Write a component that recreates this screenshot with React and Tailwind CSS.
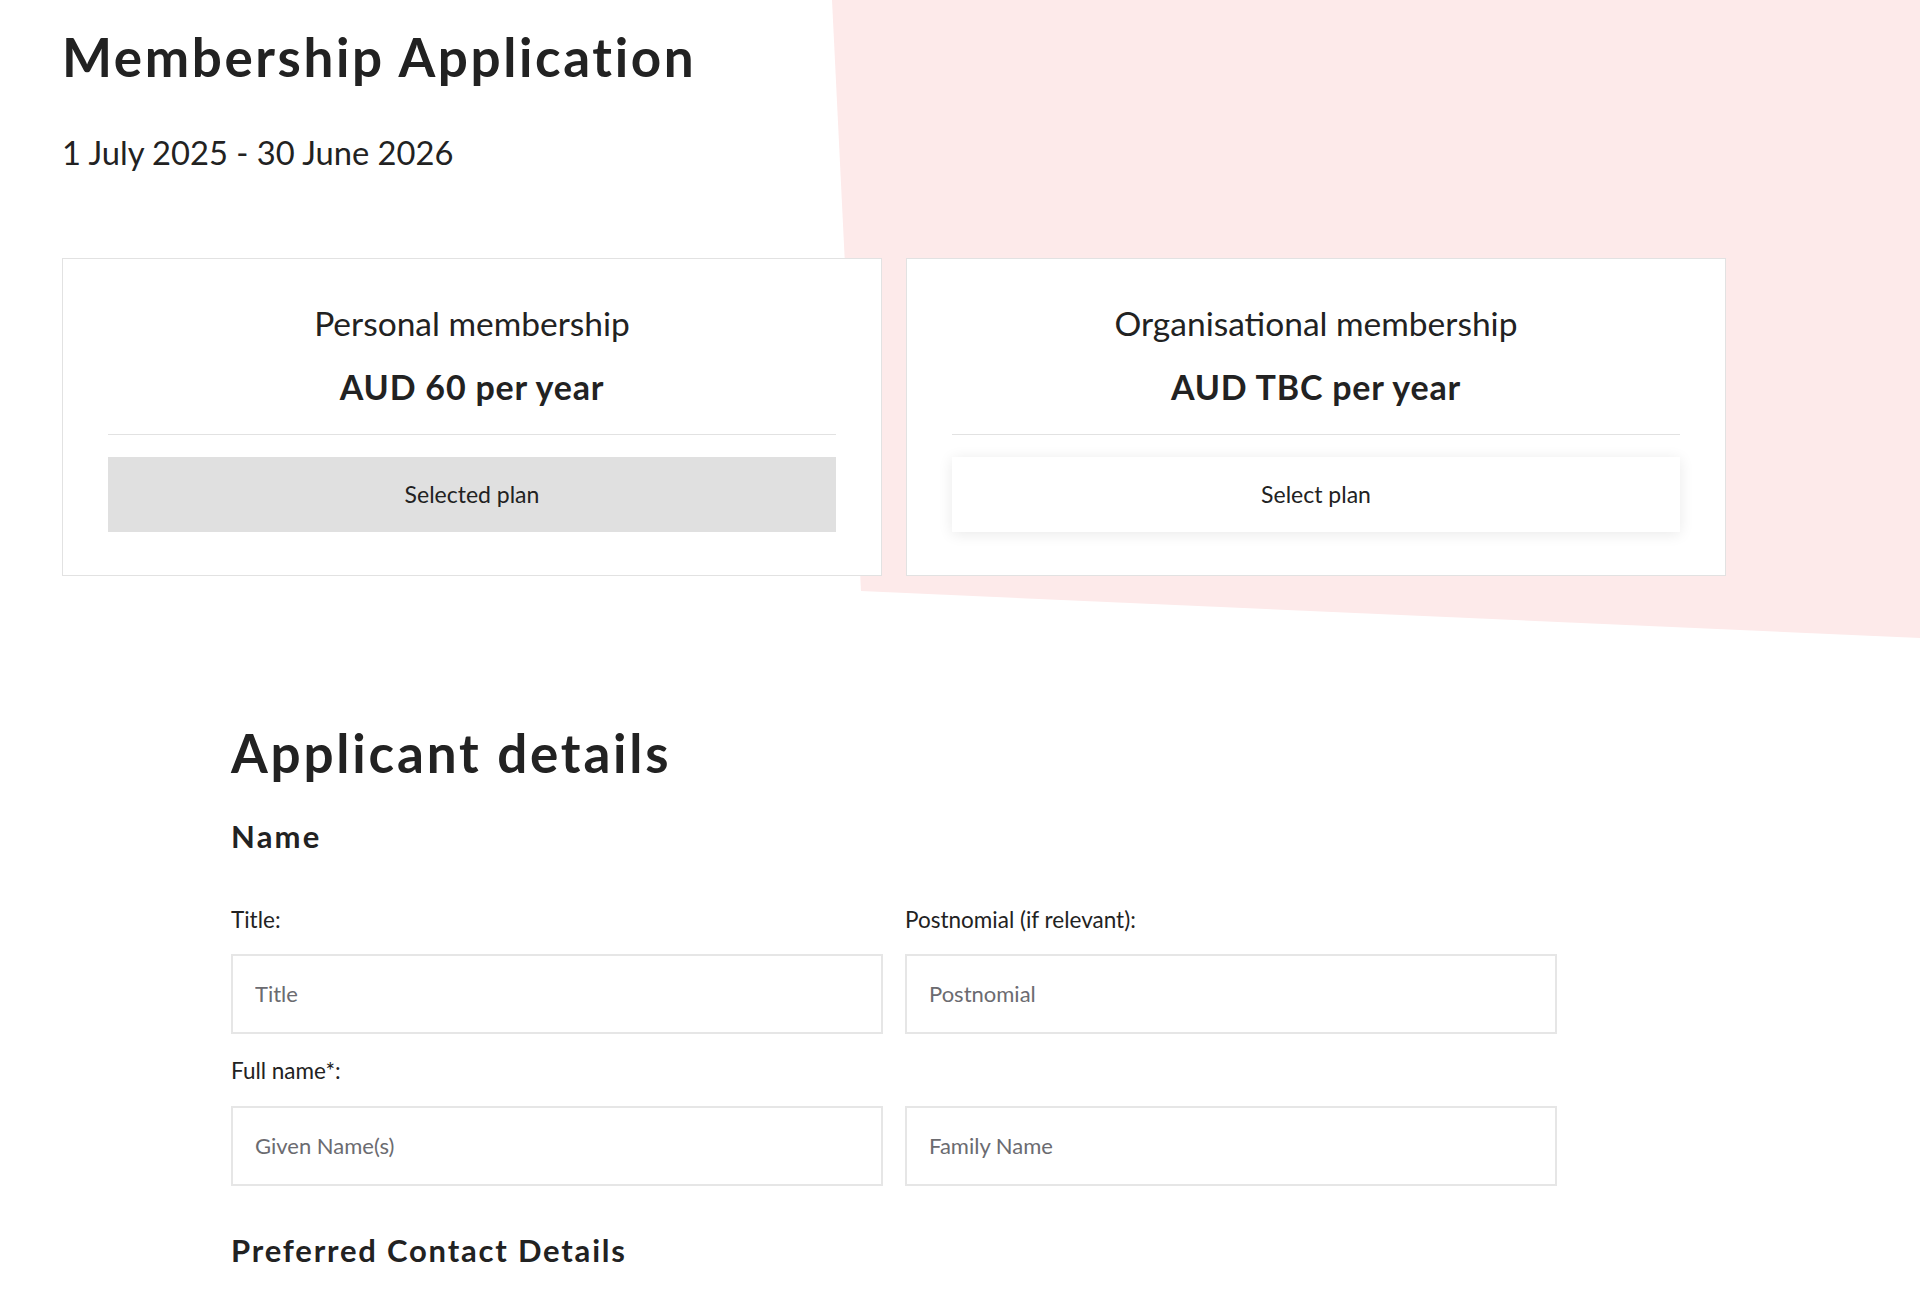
import React from "react";

const plans = [
  { name: "Personal membership", price: "AUD 60 per year", selected: true },
  { name: "Organisational membership", price: "AUD TBC per year", selected: false },
];

const PlanCard = ({ plan }) => {
  return (
    <div className="w-[820px] bg-white border border-[#e2e2e2] px-[45px] pt-[44px] pb-[43px] flex flex-col items-center text-[#222]">
      <h3 className="text-[33.5px] leading-[1.2] font-normal">{plan.name}</h3>
      <p className="mt-[24px] text-[34px] leading-[1.2] font-bold tracking-[0.8px]">{plan.price}</p>
      <div className="w-full h-px bg-[#e2e2e2] mt-[26px]"></div>
      <button
        className={
          plan.selected
            ? "mt-[22px] w-full h-[75px] bg-[#e0e0e0] text-[23px] text-[#222]"
            : "mt-[22px] w-full h-[75px] bg-white shadow-[0_2px_14px_rgba(0,0,0,0.09)] text-[23px] text-[#222]"
        }
      >
        {plan.selected ? "Selected plan" : "Select plan"}
      </button>
    </div>
  );
};

const Field = ({ placeholder }) => (
  <input
    type="text"
    placeholder={placeholder}
    className="w-[652px] h-[80px] border-2 border-[#e6e6e6] bg-white px-[22px] font-['Lato',sans-serif] text-[22px] text-[#222] placeholder:text-[#6b6b70] outline-none"
  />
);

const App = () => {
  return (
    <div className="relative min-h-[1292px] bg-white overflow-hidden font-['Lato',sans-serif] text-[#222]">
      {/* Background Decor */}
      <svg className="absolute top-0 left-0 w-[1920px] h-[640px]" viewBox="0 0 1920 640" preserveAspectRatio="none">
        <polygon points="832,0 1920,0 1920,638 861,591" fill="#fdeaea" />
      </svg>

      <div className="relative pl-[62px] pt-[25px]">
        <h1 className="text-[53px] leading-[1.2] font-bold tracking-[2.6px]">Membership Application</h1>
        <p className="mt-[44px] text-[32.7px] leading-[1.2]">1 July 2025 - 30 June 2026</p>

        <div className="mt-[86px] flex gap-[24px]">
          {plans.map((plan, index) => (
            <PlanCard key={index} plan={plan} />
          ))}
        </div>
      </div>

      <div className="relative pl-[231px] mt-[145px] pb-[40px]">
        <h2 className="text-[53px] leading-[1.2] font-bold tracking-[2.8px]">Applicant details</h2>
        <h3 className="mt-[34px] text-[31px] leading-[1.2] font-bold tracking-[2.2px]">Name</h3>

        <div className="mt-[50px] grid grid-cols-[652px_652px] gap-x-[22px]">
          <label className="text-[22.5px] leading-[1.2]">Title:</label>
          <label className="text-[22.5px] leading-[1.2]">Postnomial (if relevant):</label>
          <div className="mt-[21px]">
            <Field placeholder="Title" />
          </div>
          <div className="mt-[21px]">
            <Field placeholder="Postnomial" />
          </div>

          <label className="mt-[23px] text-[22.5px] leading-[1.2] col-span-2">Full name*:</label>
          <div className="mt-[22px]">
            <Field placeholder="Given Name(s)" />
          </div>
          <div className="mt-[22px]">
            <Field placeholder="Family Name" />
          </div>
        </div>

        <h3 className="mt-[46px] text-[31px] leading-[1.2] font-bold tracking-[1.8px]">Preferred Contact Details</h3>
      </div>
    </div>
  );
};

export default App;
